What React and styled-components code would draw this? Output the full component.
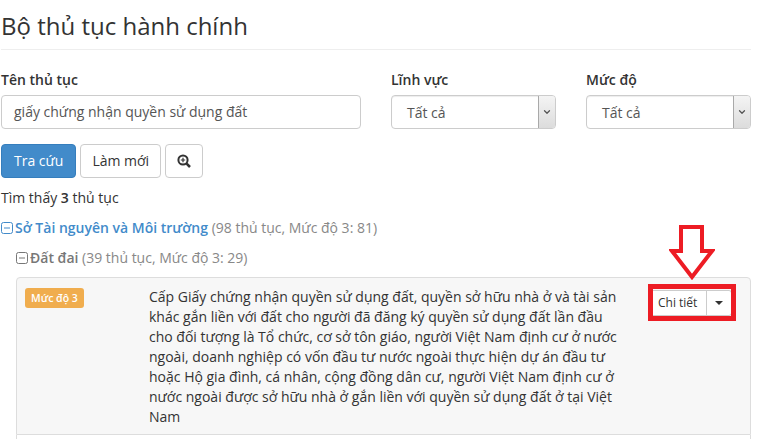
import React from "react";
import styled, { createGlobalStyle } from "styled-components";
import { ChevronDown } from "lucide-react";

const GlobalStyle = createGlobalStyle`
    html, body {
        margin: 0;
        padding: 0;
        background: #fff;
        overflow: hidden;
    }
    body {
        font-family: "Open Sans", "Noto Sans", sans-serif;
        font-size: 14px;
        line-height: 20px;
        color: #333;
    }
`;

const Page = styled.div`
    position: relative;
    width: 758px;
    height: 439px;
    overflow: hidden;
    padding: 0 7px 0 1px;
    box-sizing: border-box;
`;

const Title = styled.h1`
    margin: 0 0 20px;
    padding: 10px 0 0;
    height: 50px;
    box-sizing: border-box;
    font-size: 24px;
    line-height: 31px;
    font-weight: 400;
    border-bottom: 1px solid #eee;
`;

const Filters = styled.div`
    display: flex;
`;

const Field = styled.div`
    flex: none;
    width: ${({ width }) => width}px;
    margin-right: ${({ gap }) => gap || 0}px;
`;

const Label = styled.div`
    font-weight: 600;
    margin-bottom: 5px;
    height: 20px;
`;

const TextInput = styled.div`
    height: 34px;
    box-sizing: border-box;
    border: 1px solid #ccc;
    border-radius: 4px;
    padding: 6px 12px;
    color: #555;
`;

const Select = styled.div`
    display: flex;
    height: 34px;
    box-sizing: border-box;
    border: 1px solid #ccc;
    border-radius: 4px;
    color: #555;
    box-shadow: inset 0 1px 1px rgba(0, 0, 0, 0.075);
    overflow: hidden;
`;

const SelectValue = styled.div`
    flex: 1;
    padding: 7px 15px 5px;
`;

const SelectArrow = styled.div`
    width: 16px;
    display: flex;
    align-items: center;
    justify-content: center;
    border-left: 1px solid #a9a9a9;
    background: linear-gradient(#f4f4f4, #dcdcdc);
    color: #555;
`;

const Actions = styled.div`
    display: flex;
    gap: 4px;
    margin-top: 15px;
`;

const Button = styled.div`
    height: 34px;
    box-sizing: border-box;
    display: flex;
    align-items: center;
    padding: 0 ${({ pad }) => pad || 12}px;
    border: 1px solid ${({ primary }) => (primary ? "#357ebd" : "#ccc")};
    border-radius: 4px;
    background: ${({ primary }) => (primary ? "#428bca" : "#fff")};
    color: ${({ primary }) => (primary ? "#fff" : "#333")};
`;

const Found = styled.div`
    margin-top: 10px;

    b {
        font-weight: 600;
    }
`;

const TreeRow = styled.div`
    display: flex;
    align-items: center;
    gap: 2px;
    margin-top: 10px;
    color: #888;
    padding-left: ${({ indent }) => indent || 0}px;
`;

const TreeName = styled.b`
    font-weight: 600;
    color: ${({ color }) => color};
`;

const Card = styled.div`
    display: flex;
    margin: 9px 0 0 15px;
    width: 735px;
    height: 158px;
    box-sizing: border-box;
    padding: 9px 8px 8px;
    background: #f7f7f7;
    border: 1px solid #ddd;
    border-radius: 4px 4px 0 0;
`;

const NextCard = styled.div`
    margin-left: 15px;
    width: 735px;
    height: 20px;
    box-sizing: border-box;
    border: 1px solid #ddd;
    border-width: 0 1px;
`;

const BadgeCol = styled.div`
    flex: none;
    width: 124px;
`;

const Badge = styled.span`
    display: inline-block;
    background: #f0ad4e;
    color: #fff;
    border-radius: 3px;
    font-size: 10.5px;
    font-weight: 600;
    line-height: 20px;
    padding: 0 6px;
`;

const CardText = styled.div`
    flex: none;
    width: 476px;
    margin-right: 25px;
`;

const SplitButton = styled.div`
    display: flex;
    align-items: center;
    height: 24px;
    margin-top: 3px;
    border: 1px solid #ccc;
    border-radius: 3px;
    background: #fff;
    font-size: 12px;
`;

const SplitLabel = styled.div`
    padding: 0 9px 0 7px;
    line-height: 24px;
    border-right: 1px solid #ccc;
`;

const Caret = styled.div`
    margin: 0 8px;
    width: 0;
    height: 0;
    border-left: 4px solid transparent;
    border-right: 4px solid transparent;
    border-top: 4px solid #333;
`;

const Highlight = styled.div`
    position: absolute;
    left: 648px;
    top: 284px;
    width: 88px;
    height: 37px;
    box-sizing: border-box;
    border: 5px solid #ed1c24;
`;

const Arrow = styled.svg`
    position: absolute;
    left: 669px;
    top: 224px;
`;

const TreeToggle = ({ color }) => (
    <svg width="12" height="12" viewBox="0 0 12 12" fill="none" stroke={color}>
        <rect x="0.5" y="0.5" width="11" height="11" rx="2" />
        <path d="M3 6h6" />
    </svg>
);

const SearchPlus = () => (
    <svg width="14" height="14" viewBox="0 0 14 14" fill="none" stroke="#333">
        <circle cx="6" cy="6" r="4.6" strokeWidth="2" />
        <path d="M9.6 9.6L13 13" strokeWidth="2.6" />
        <path d="M6 3.8v4.4M3.8 6h4.4" strokeWidth="1.2" />
    </svg>
);

export default function App() {
    return (
        <Page>
            <GlobalStyle />
            <Title>Bộ thủ tục hành chính</Title>
            <Filters>
                <Field width={360} gap={30}>
                    <Label>Tên thủ tục</Label>
                    <TextInput>giấy chứng nhận quyền sử dụng đất</TextInput>
                </Field>
                <Field width={165} gap={30}>
                    <Label>Lĩnh vực</Label>
                    <Select>
                        <SelectValue>Tất cả</SelectValue>
                        <SelectArrow>
                            <ChevronDown size={10} strokeWidth={3} />
                        </SelectArrow>
                    </Select>
                </Field>
                <Field width={165}>
                    <Label>Mức độ</Label>
                    <Select>
                        <SelectValue>Tất cả</SelectValue>
                        <SelectArrow>
                            <ChevronDown size={10} strokeWidth={3} />
                        </SelectArrow>
                    </Select>
                </Field>
            </Filters>
            <Actions>
                <Button primary>Tra cứu</Button>
                <Button pad={11}>Làm mới</Button>
                <Button pad={11}>
                    <SearchPlus />
                </Button>
            </Actions>
            <Found>
                Tìm thấy <b>3</b> thủ tục
            </Found>
            <TreeRow>
                <TreeToggle color="#428bca" />
                <span>
                    <TreeName color="#428bca">Sở Tài nguyên và Môi trường</TreeName> (98 thủ tục, Mức độ 3: 81)
                </span>
            </TreeRow>
            <TreeRow indent={15}>
                <TreeToggle color="#777" />
                <span>
                    <TreeName color="#777">Đất đai</TreeName> (39 thủ tục, Mức độ 3: 29)
                </span>
            </TreeRow>
            <Card>
                <BadgeCol>
                    <Badge>Mức độ 3</Badge>
                </BadgeCol>
                <CardText>
                    Cấp Giấy chứng nhận quyền sử dụng đất, quyền sở hữu nhà ở và tài sản khác gắn liền với đất cho
                    người đã đăng ký quyền sử dụng đất lần đầu cho đối tượng là Tổ chức, cơ sở tôn giáo, người Việt Nam
                    định cư ở nước ngoài, doanh nghiệp có vốn đầu tư nước ngoài thực hiện dự án đầu tư hoặc Hộ gia
                    đình, cá nhân, cộng đồng dân cư, người Việt Nam định cư ở nước ngoài được sở hữu nhà ở gắn liền với
                    quyền sử dụng đất ở tại Việt Nam
                </CardText>
                <div>
                    <SplitButton>
                        <SplitLabel>Chi tiết</SplitLabel>
                        <Caret />
                    </SplitButton>
                </div>
            </Card>
            <NextCard />
            <Highlight />
            <Arrow width="46" height="56" viewBox="0 0 46 56" fill="#fff" stroke="#ed1c24" strokeWidth="4">
                <path d="M12 3H33V27H43L23 53L3 27H12Z" />
            </Arrow>
        </Page>
    );
}
